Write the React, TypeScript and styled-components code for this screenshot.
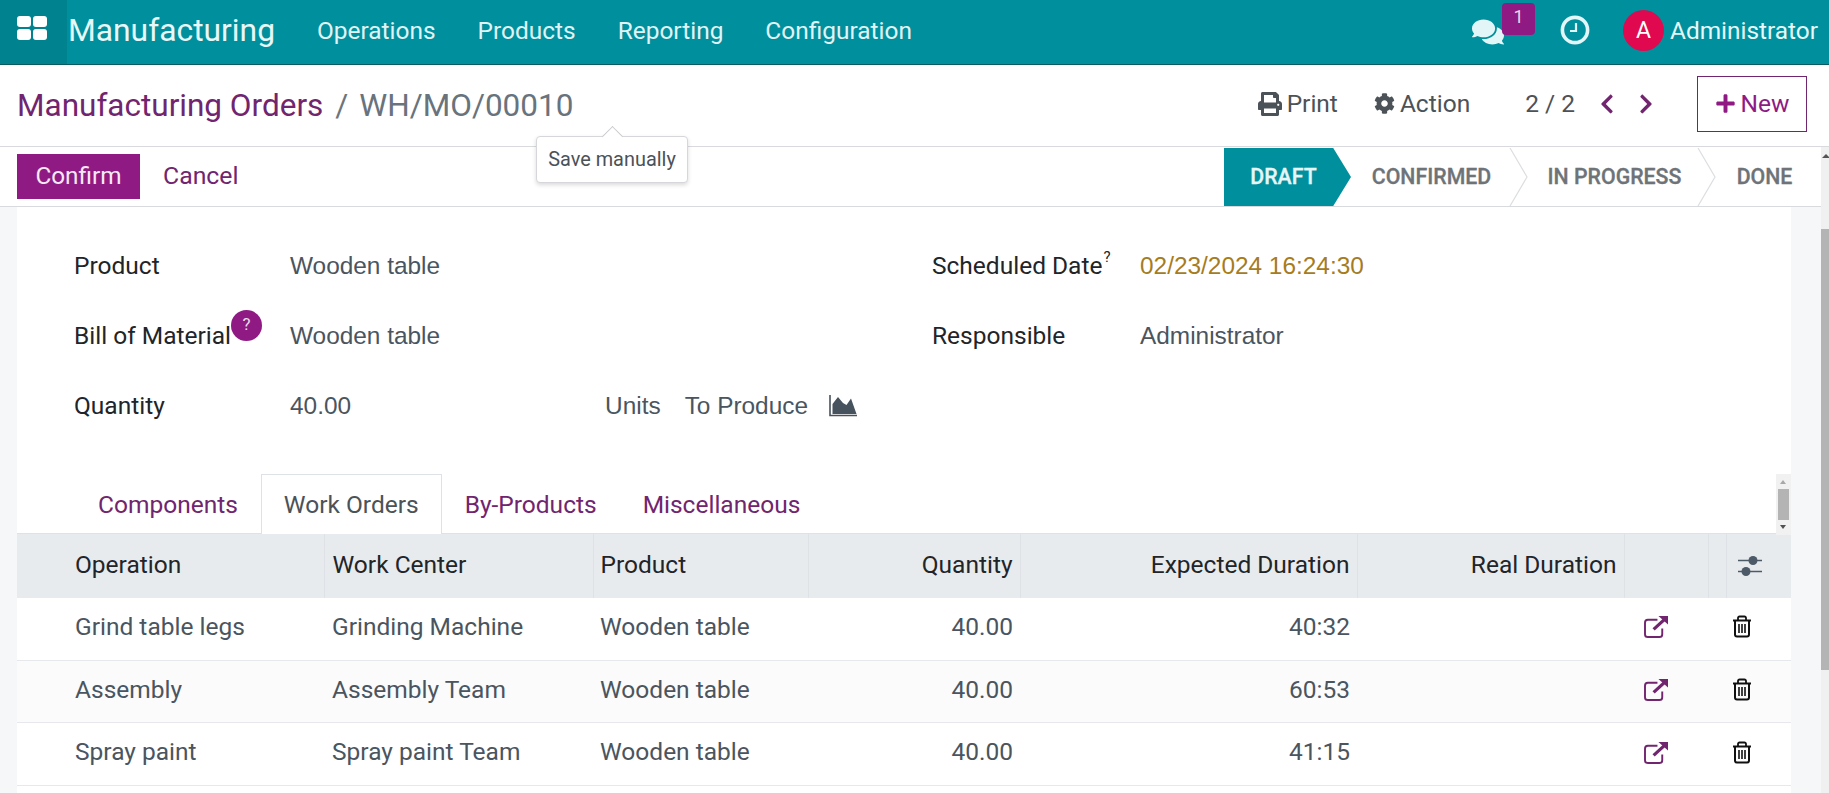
import React from "react";
import styled, { createGlobalStyle } from "styled-components";
import { FaComments, FaPrint, FaCog, FaChevronLeft, FaChevronRight, FaPlus } from "react-icons/fa";

const GlobalStyle = createGlobalStyle`
  html, body {
    margin: 0;
    height: 100%;
    overflow: hidden;
    font-family: Roboto, "Liberation Sans", sans-serif;
    background: #fff;
  }
`;

const Shell = styled.div`
  position: relative;
  display: flex;
  flex-direction: column;
  height: 793px;
  overflow: hidden;
`;

const NavBar = styled.div`
  display: flex;
  align-items: center;
  flex: 0 0 64px;
  box-sizing: content-box;
  height: 64px;
  background: #008f9c;
  border-bottom: 1px solid #0a5a62;
  color: #fff;
`;

const AppsButton = styled.div`
  width: 67px;
  height: 100%;
  padding: 16px 0 0 17px;
  box-sizing: border-box;
  background: #00828f;
`;

const Brand = styled.div`
  margin: 0 0 4px 1px;
  font-size: 31.8px;
  color: #e8f7f8;
`;

const NavMenu = styled.div`
  display: flex;
  gap: 42px;
  margin: 0 0 4px 42px;
  font-size: 24.45px;
  color: #e0f3f5;
`;

const NavRight = styled.div`
  display: flex;
  align-items: center;
  margin: 0 0 4px auto;
  padding-right: 11px;
`;

const Chat = styled.div`
  position: relative;
  display: flex;
  width: 62px;
  margin-right: 26px;
  padding-top: 4px;
  color: #e2f5f7;
`;

const Badge = styled.span`
  position: absolute;
  left: 30px;
  top: -9px;
  width: 33px;
  height: 32px;
  border-radius: 4px;
  background: #8f1a84;
  color: #e8d8e6;
  font-size: 18px;
  text-align: center;
  line-height: 28px;
`;

const Avatar = styled.span`
  width: 41px;
  height: 41px;
  margin: 0 6px 0 33px;
  border-radius: 50%;
  background: #e0094f;
  color: #fff;
  font-size: 23px;
  line-height: 41px;
  text-align: center;
`;

const UserName = styled.span`
  font-size: 24.4px;
  color: #e8f7f8;
`;

const Header = styled.div`
  display: flex;
  align-items: center;
  flex: 0 0 81px;
  padding: 0 22px 0 17px;
  border-bottom: 1px solid #d8dadd;
`;

const Crumb = styled.span`
  font-size: 31.5px;
  color: #71256f;
`;

const CrumbSep = styled.span`
  margin: 0 12px;
  font-size: 31.5px;
  color: #6c757d;
`;

const CrumbCurrent = styled.span`
  margin-left: -1px;
  font-size: 31.5px;
  color: #68737d;
`;

const HeaderRight = styled.div`
  display: flex;
  align-items: center;
  margin: 0 0 4px auto;
`;

const ToolButton = styled.span`
  display: flex;
  align-items: center;
  gap: 5px;
  margin-right: 36px;
  font-size: 24.5px;
  color: #4b5258;
`;

const Pager = styled.span`
  margin: 0 21px 0 19px;
  font-size: 24.5px;
  color: #4b5258;
`;

const PagerArrows = styled.span`
  display: flex;
  gap: 17px;
  margin-right: 40px;
  color: #71256f;
`;

const NewButton = styled.span`
  display: flex;
  align-items: center;
  justify-content: center;
  gap: 5px;
  width: 110px;
  height: 56px;
  box-sizing: border-box;
  border: 1px solid #71256f;
  font-size: 24.5px;
  color: #8f1a84;
`;

const Main = styled.div`
  display: flex;
  flex: 1;
  min-height: 0;
`;

const Content = styled.div`
  display: flex;
  flex-direction: column;
  flex: 1;
  min-width: 0;
`;

const StatusRow = styled.div`
  display: flex;
  align-items: center;
  flex: 0 0 59px;
  padding-left: 17px;
  border-bottom: 1px solid #d8dadd;
`;

const ConfirmButton = styled.span`
  width: 123px;
  height: 45px;
  background: #8f1a84;
  color: #f4e9f3;
  font-size: 24.3px;
  line-height: 43px;
  text-align: center;
`;

const CancelButton = styled.span`
  margin: 0 0 2px 23px;
  font-size: 24.8px;
  color: #71256f;
`;

const Stages = styled.div`
  display: flex;
  align-items: stretch;
  align-self: stretch;
  margin-left: auto;
  margin-right: 9px;
  margin-top: 1px;
`;

const Stage = styled.span<{ $active?: boolean; $width: number; $left?: number; $right?: number }>`
  width: ${(p) => p.$width}px;
  padding: 0 ${(p) => p.$right ?? 0}px 0 ${(p) => p.$left ?? 0}px;
  box-sizing: border-box;
  font-size: 21.3px;
  font-weight: 500;
  -webkit-text-stroke: 0.3px currentColor;
  line-height: 58px;
  text-align: center;
  color: ${(p) => (p.$active ? "#e6f6f7" : "#6e7378")};
  background: ${(p) => (p.$active ? "#008f9c" : "transparent")};
  clip-path: ${(p) => (p.$active ? "polygon(0 0, 86% 0, 100% 50%, 86% 100%, 0 100%)" : "none")};
`;

const StageArrow = styled.svg`
  flex: 0 0 20px;
  width: 20px;
  height: 58px;
`;

const Tooltip = styled.div`
  position: absolute;
  left: 536px;
  top: 136px;
  width: 152px;
  height: 47px;
  box-sizing: border-box;
  border: 1px solid #d5d7da;
  border-radius: 4px;
  background: #fff;
  box-shadow: 0 2px 4px rgba(0, 0, 0, 0.15);
  font-size: 19.9px;
  line-height: 46px;
  text-align: center;
  color: #4b5258;

  &::before {
    content: "";
    position: absolute;
    left: 68px;
    top: -8px;
    width: 14px;
    height: 14px;
    background: #fff;
    border-left: 1px solid #c8cacd;
    border-top: 1px solid #c8cacd;
    transform: rotate(45deg);
  }
`;

const Body = styled.div`
  flex: 1;
  min-height: 0;
  padding: 0 30px 0 17px;
  background: #f6f7f9;
`;

const PageScroll = styled.div`
  position: relative;
  flex: 0 0 8px;
  padding-top: 82px;
  box-sizing: border-box;
  background: #f0f0f0;

  &::before {
    content: "";
    position: absolute;
    left: 1px;
    top: 7px;
    border: 4px solid transparent;
    border-top: none;
    border-bottom: 4px solid #555;
  }

  &::after {
    content: "";
    display: block;
    height: 441px;
    background: #b4b4b4;
  }
`;

const Sheet = styled.div`
  background: #fff;
  height: 100%;
`;

const FormGrid = styled.div`
  display: grid;
  grid-template-columns: 858px 1fr;
  padding: 29px 0 0 58px;
  height: 267px;
  box-sizing: border-box;
`;

const FormColumn = styled.div`
  display: flex;
  flex-direction: column;
`;

const FormRow = styled.div`
  display: flex;
  align-items: center;
  height: 60px;
  margin-bottom: 10px;
`;

const FieldLabel = styled.span<{ $width: number }>`
  display: flex;
  width: ${(p) => p.$width}px;
  margin-left: -1px;
  padding-bottom: 2px;
  font-size: 24.5px;
  color: #212529;
`;

const FieldValue = styled.span`
  margin-left: 1px;
  font-family: "Liberation Sans", Arial, sans-serif;
  font-size: 24.4px;
  color: #4a5560;
`;

const DateValue = styled(FieldValue)`
  margin-left: 0;
  color: #a67c1e;
`;

const ResponsibleValue = styled(FieldValue)`
  margin-left: 0;
`;

const Units = styled(FieldValue)`
  display: flex;
  align-items: center;
  gap: 24px;
  margin-left: 254px;
`;

const ChartWrap = styled.span`
  display: flex;
  margin-left: -3px;
`;

const HelpBadge = styled.span`
  align-self: flex-start;
  width: 31px;
  height: 31px;
  margin-top: -11px;
  border-radius: 50%;
  background: #8f1a84;
  color: #e9dbe8;
  font-size: 17px;
  line-height: 29px;
  text-align: center;
`;

const HelpMark = styled.sup`
  margin: -1px 0 0 1px;
  font-size: 15px;
  line-height: 1;
`;

const TabsBar = styled.div`
  position: relative;
  display: flex;
  height: 60px;
  padding-left: 58px;
  box-sizing: border-box;
  border-bottom: 1px solid #dee2e6;
  font-size: 24.5px;
`;

const Tab = styled.span<{ $active?: boolean }>`
  position: relative;
  z-index: 1;
  height: ${(p) => (p.$active ? 60 : 59)}px;
  padding: 0 22px;
  box-sizing: border-box;
  line-height: 60px;
  color: ${(p) => (p.$active ? "#4b5258" : "#71256f")};
  background: #fff;
  border: 1px solid ${(p) => (p.$active ? "#dee2e6" : "transparent")};
  border-bottom: none;
`;

const InnerScroll = styled.div`
  position: absolute;
  right: 0;
  top: 0;
  width: 15px;
  height: 61px;
  background: #f1f1f1;
`;

const ScrollThumb = styled.div`
  position: absolute;
  left: 2px;
  top: 15px;
  width: 11px;
  height: 31px;
  background: #b4b4b4;
`;

const ScrollUp = styled.div`
  position: absolute;
  left: 4px;
  top: 6px;
  border: 3.5px solid transparent;
  border-bottom: 4px solid #a8a8a8;
  border-top: none;
`;

const ScrollDown = styled.div`
  position: absolute;
  left: 4px;
  bottom: 6px;
  border: 3.5px solid transparent;
  border-top: 4px solid #505050;
  border-bottom: none;
`;

const Table = styled.table`
  width: 100%;
  table-layout: fixed;
  border-collapse: collapse;
  font-size: 24.5px;
`;

const HeadRow = styled.tr`
  height: 64px;
  background: #e8ebee;
`;

const HeadCell = styled.th<{ $right?: boolean; $pad?: number }>`
  padding: 0 7px 3px ${(p) => p.$pad ?? 7}px;
  font-weight: 400;
  color: #212529;
  text-align: ${(p) => (p.$right ? "right" : "left")};
  border-left: 1px solid #dee1e5;

  &:first-child {
    border-left: none;
  }
`;

const SliderCell = styled.th`
  padding: 0 17px 5px 0;
  text-align: center;
  border-left: 1px solid #dee1e5;
`;

const Row = styled.tr<{ $odd?: boolean }>`
  height: 62.4px;
  background: ${(p) => (p.$odd ? "#fbfbfc" : "#fff")};
  border-bottom: 1px solid #e6e8eb;
`;

const Cell = styled.td<{ $right?: boolean; $pad?: number }>`
  padding: 0 7px 4px ${(p) => p.$pad ?? 7}px;
  color: #4a5560;
  text-align: ${(p) => (p.$right ? "right" : "left")};
`;

const IconCell = styled.td<{ $shift: number }>`
  padding: 0 ${(p) => p.$shift}px 8px 0;
  text-align: center;
  vertical-align: middle;
`;

const AppsIcon = () => (
  <svg width="30" height="24" viewBox="0 0 30 24" fill="#fff" style={{ display: "block" }}>
    <rect x="0" y="0" width="14" height="11" rx="3" />
    <rect x="16" y="0" width="14" height="11" rx="3" />
    <rect x="0" y="13" width="14" height="11" rx="3" />
    <rect x="16" y="13" width="14" height="11" rx="3" />
  </svg>
);

const ClockIcon = () => (
  <svg width="30" height="30" viewBox="0 0 30 30" fill="none" stroke="#e2f5f7">
    <circle cx="15" cy="15" r="12.6" strokeWidth="3.6" />
    <path d="M16 8v8h-6" strokeWidth="2.2" />
  </svg>
);

const ChartIcon = () => (
  <svg width="28" height="22" viewBox="0 0 28 22">
    <path d="M1 0v20.500h27" fill="none" stroke="#47525f" strokeWidth="1.6" />
    <path d="M3.500 19V9L9 2l5 6 3.500 2L22 3.500 27.500 19z" fill="#47525f" />
  </svg>
);

const LinkIcon = () => (
  <svg width="25" height="23" viewBox="0 0 26 24" fill="none" stroke="#71256f" style={{ verticalAlign: "middle" }}>
    <path d="M14 5H4a3 3 0 0 0-3 3v12a3 3 0 0 0 3 3h12a3 3 0 0 0 3-3v-6" strokeWidth="2" />
    <path d="M10 15L22 4" strokeWidth="3.4" />
    <path d="M15 1h10v9z" fill="#71256f" stroke="none" />
  </svg>
);

const TrashIcon = () => (
  <svg width="20" height="23" viewBox="0 0 20 22" fill="none" stroke="#111" style={{ verticalAlign: "middle" }}>
    <path d="M1 5h18" strokeWidth="2" />
    <path d="M6 5V2.500A1.500 1.500 0 0 1 7.500 1h5A1.500 1.500 0 0 1 14 2.500V5" strokeWidth="1.800" />
    <path d="M3 5v14a2 2 0 0 0 2 2h10a2 2 0 0 0 2-2V5" strokeWidth="2" />
    <path d="M7 8.500v9M10 8.500v9M13 8.500v9" strokeWidth="1.600" />
  </svg>
);

const SlidersIcon = () => (
  <svg width="26" height="22" viewBox="0 0 26 22" style={{ verticalAlign: "middle" }}>
    <path d="M1 5.500h24M1 16.500h24" stroke="#4d5a68" strokeWidth="1.500" />
    <circle cx="16" cy="5.500" r="4.500" fill="#4d5a68" />
    <circle cx="9" cy="16.500" r="4.500" fill="#4d5a68" />
  </svg>
);

const rows = [
  { op: "Grind table legs", center: "Grinding Machine", dur: "40:32" },
  { op: "Assembly", center: "Assembly Team", dur: "60:53" },
  { op: "Spray paint", center: "Spray paint Team", dur: "41:15" },
];

const App = () => {
  return (
    <Shell>
      <GlobalStyle />
      <NavBar>
        <AppsButton>
          <AppsIcon />
        </AppsButton>
        <Brand>Manufacturing</Brand>
        <NavMenu>
          <span>Operations</span>
          <span>Products</span>
          <span>Reporting</span>
          <span>Configuration</span>
        </NavMenu>
        <NavRight>
          <Chat>
            <FaComments size={32} />
            <Badge>1</Badge>
          </Chat>
          <ClockIcon />
          <Avatar>A</Avatar>
          <UserName>Administrator</UserName>
        </NavRight>
      </NavBar>
      <Header>
        <Crumb>Manufacturing Orders</Crumb>
        <CrumbSep>/</CrumbSep>
        <CrumbCurrent>WH/MO/00010</CrumbCurrent>
        <HeaderRight>
          <ToolButton>
            <FaPrint size={24} />
            Print
          </ToolButton>
          <ToolButton>
            <FaCog size={21} />
            Action
          </ToolButton>
          <Pager>2 / 2</Pager>
          <PagerArrows>
            <FaChevronLeft size={22} />
            <FaChevronRight size={22} />
          </PagerArrows>
          <NewButton>
            <FaPlus size={21} />
            New
          </NewButton>
        </HeaderRight>
      </Header>
      <Main>
        <Content>
          <StatusRow>
            <ConfirmButton>Confirm</ConfirmButton>
            <CancelButton>Cancel</CancelButton>
            <Stages>
              <Stage $active $width={127} $right={8}>DRAFT</Stage>
              <Stage $width={158} $left={3}>CONFIRMED</Stage>
              <StageArrow viewBox="0 0 20 58">
                <path d="M1 0l17 29L1 58" fill="none" stroke="#dcdee1" strokeWidth="1.2" />
              </StageArrow>
              <Stage $width={168} $left={3}>IN PROGRESS</Stage>
              <StageArrow viewBox="0 0 20 58">
                <path d="M1 0l17 29L1 58" fill="none" stroke="#dcdee1" strokeWidth="1.2" />
              </StageArrow>
              <Stage $width={95}>DONE</Stage>
            </Stages>
          </StatusRow>
          <Body>
            <Sheet>
              <FormGrid>
                <FormColumn>
                  <FormRow>
                    <FieldLabel $width={215}>Product</FieldLabel>
                    <FieldValue>Wooden table</FieldValue>
                  </FormRow>
                  <FormRow>
                    <FieldLabel $width={215}>
                      Bill of Material
                      <HelpBadge>?</HelpBadge>
                    </FieldLabel>
                    <FieldValue>Wooden table</FieldValue>
                  </FormRow>
                  <FormRow>
                    <FieldLabel $width={215}>Quantity</FieldLabel>
                    <FieldValue>40.00</FieldValue>
                    <Units>
                      <span>Units</span>
                      <span>To Produce</span>
                      <ChartWrap>
                        <ChartIcon />
                      </ChartWrap>
                    </Units>
                  </FormRow>
                </FormColumn>
                <FormColumn>
                  <FormRow>
                    <FieldLabel $width={208}>
                      Scheduled Date
                      <HelpMark>?</HelpMark>
                    </FieldLabel>
                    <DateValue>02/23/2024 16:24:30</DateValue>
                  </FormRow>
                  <FormRow>
                    <FieldLabel $width={208}>Responsible</FieldLabel>
                    <ResponsibleValue>Administrator</ResponsibleValue>
                  </FormRow>
                </FormColumn>
              </FormGrid>
              <TabsBar>
                <Tab>Components</Tab>
                <Tab $active>Work Orders</Tab>
                <Tab>By-Products</Tab>
                <Tab>Miscellaneous</Tab>
                <InnerScroll>
                  <ScrollUp />
                  <ScrollThumb />
                  <ScrollDown />
                </InnerScroll>
              </TabsBar>
              <Table>
                <colgroup>
                  <col style={{ width: 307 }} />
                  <col style={{ width: 269 }} />
                  <col style={{ width: 215 }} />
                  <col style={{ width: 212 }} />
                  <col style={{ width: 337 }} />
                  <col style={{ width: 267 }} />
                  <col style={{ width: 84 }} />
                  <col style={{ width: 18 }} />
                  <col style={{ width: 65 }} />
                </colgroup>
                <thead>
                  <HeadRow>
                    <HeadCell $pad={58}>Operation</HeadCell>
                    <HeadCell $pad={8}>Work Center</HeadCell>
                    <HeadCell>Product</HeadCell>
                    <HeadCell $right>Quantity</HeadCell>
                    <HeadCell $right>Expected Duration</HeadCell>
                    <HeadCell $right>Real Duration</HeadCell>
                    <HeadCell />
                    <HeadCell />
                    <SliderCell>
                      <SlidersIcon />
                    </SliderCell>
                  </HeadRow>
                </thead>
                <tbody>
                  {rows.map((r, i) => (
                    <Row key={r.op} $odd={i === 1}>
                      <Cell $pad={58}>{r.op}</Cell>
                      <Cell $pad={8}>{r.center}</Cell>
                      <Cell>Wooden table</Cell>
                      <Cell $right>40.00</Cell>
                      <Cell $right>{r.dur}</Cell>
                      <Cell />
                      <IconCell $shift={20}>
                        <LinkIcon />
                      </IconCell>
                      <IconCell colSpan={2} $shift={16}>
                        <TrashIcon />
                      </IconCell>
                    </Row>
                  ))}
                </tbody>
              </Table>
            </Sheet>
          </Body>
        </Content>
        <PageScroll />
      </Main>
      <Tooltip>Save manually</Tooltip>
    </Shell>
  );
};

export default App;
